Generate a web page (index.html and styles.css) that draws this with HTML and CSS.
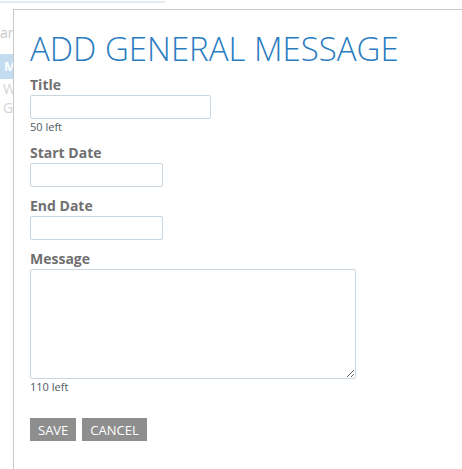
FILE: index.html
```html
<!DOCTYPE html>
<html lang="en">
<head>
    <meta charset="UTF-8">
    <meta name="viewport" content="width=device-width, initial-scale=1.0">
    <title>Add General Message</title>
    <link rel="stylesheet" href="styles.css">
</head>
<body>

    <!-- Page behind the dialog -->
    <div class="page">
        <div class="topbar"></div>
        <div class="sidenav">
            <div class="side-text">an</div>
            <div class="side-active">M</div>
            <div class="side-item">W</div>
            <div class="side-item">G</div>
        </div>
    </div>

    <!-- Dialog -->
    <div class="dialog">
        <h1 class="dialog-title">ADD GENERAL MESSAGE</h1>

        <form class="message-form">
            <label class="field-label" for="title">Title</label>
            <input type="text" id="title" class="input input-wide" maxlength="50">
            <div class="counter">50 left</div>

            <label class="field-label gap-sm" for="start-date">Start Date</label>
            <input type="text" id="start-date" class="input input-date">

            <label class="field-label" for="end-date">End Date</label>
            <input type="text" id="end-date" class="input input-date">

            <label class="field-label" for="message">Message</label>
            <textarea id="message" class="input textarea" maxlength="110"></textarea>
            <div class="counter">110 left</div>

            <div class="actions">
                <button type="button" class="btn">SAVE</button>
                <button type="button" class="btn">CANCEL</button>
            </div>
        </form>
    </div>

</body>
</html>
```

FILE: styles.css
```css
/* Reset styles */
* {
    margin: 0;
    padding: 0;
    box-sizing: border-box;
}

body {
    font-family: 'Open Sans', 'Liberation Sans', sans-serif;
    background-color: #ffffff;
    color: #333;
    width: 462px;
    height: 469px;
    overflow: hidden;
    position: relative;
}

/* Page behind the dialog */
.topbar {
    width: 165px;
    height: 3px;
    border-bottom: 2px solid #e3ebf1;
}

.sidenav {
    padding-top: 20px;
    width: 40px;
}

.side-text {
    font-size: 14px;
    line-height: 20px;
    color: #c9c9c9;
}

.side-active {
    margin-top: 11px;
    height: 25px;
    background-color: #c3dcef;
    color: #ffffff;
    font-weight: bold;
    font-size: 13px;
    line-height: 25px;
    padding-left: 4px;
}

.side-item {
    font-size: 14px;
    line-height: 20px;
    color: #d4d4d4;
    padding-left: 3px;
}

.side-item + .side-item {
    margin-top: -1px;
}

.sidenav .side-item:first-of-type {
    margin-top: 9px;
}

/* Dialog */
.dialog {
    position: absolute;
    left: 13px;
    top: 9px;
    width: 470px;
    height: 480px;
    background-color: #ffffff;
    border: 1px solid #c8c8c8;
    padding: 16px 0 0 16px;
}

.dialog-title {
    font-size: 33px;
    font-weight: 300;
    line-height: 44px;
    color: #2a7cc0;
    padding-top: 1px;
    margin-bottom: -1px;
}

.message-form {
    display: flex;
    flex-direction: column;
    align-items: flex-start;
    margin-top: 5px;
}

.field-label {
    font-size: 14px;
    font-weight: bold;
    line-height: 20px;
    color: #707070;
    margin-top: 9px;
}

.message-form .field-label:first-child {
    margin-top: 0;
}

.field-label.gap-sm {
    margin-top: 8px;
}

.input {
    border: 1px solid #c9d6e0;
    border-radius: 2px;
    background-color: #ffffff;
    font-family: inherit;
    font-size: 13px;
}

.input-wide {
    width: 181px;
    height: 24px;
}

.input-date {
    width: 133px;
    height: 24px;
}

.textarea {
    width: 326px;
    height: 110px;
    resize: both;
}

.counter {
    font-size: 11px;
    line-height: 16px;
    color: #4f5a63;
}

/* Buttons */
.actions {
    display: flex;
    gap: 6px;
    margin-top: 23px;
}

.btn {
    background-color: #8e8e8e;
    color: #ffffff;
    border: none;
    height: 23px;
    padding: 0 8px;
    font-family: inherit;
    font-size: 13px;
    cursor: pointer;
}
```
